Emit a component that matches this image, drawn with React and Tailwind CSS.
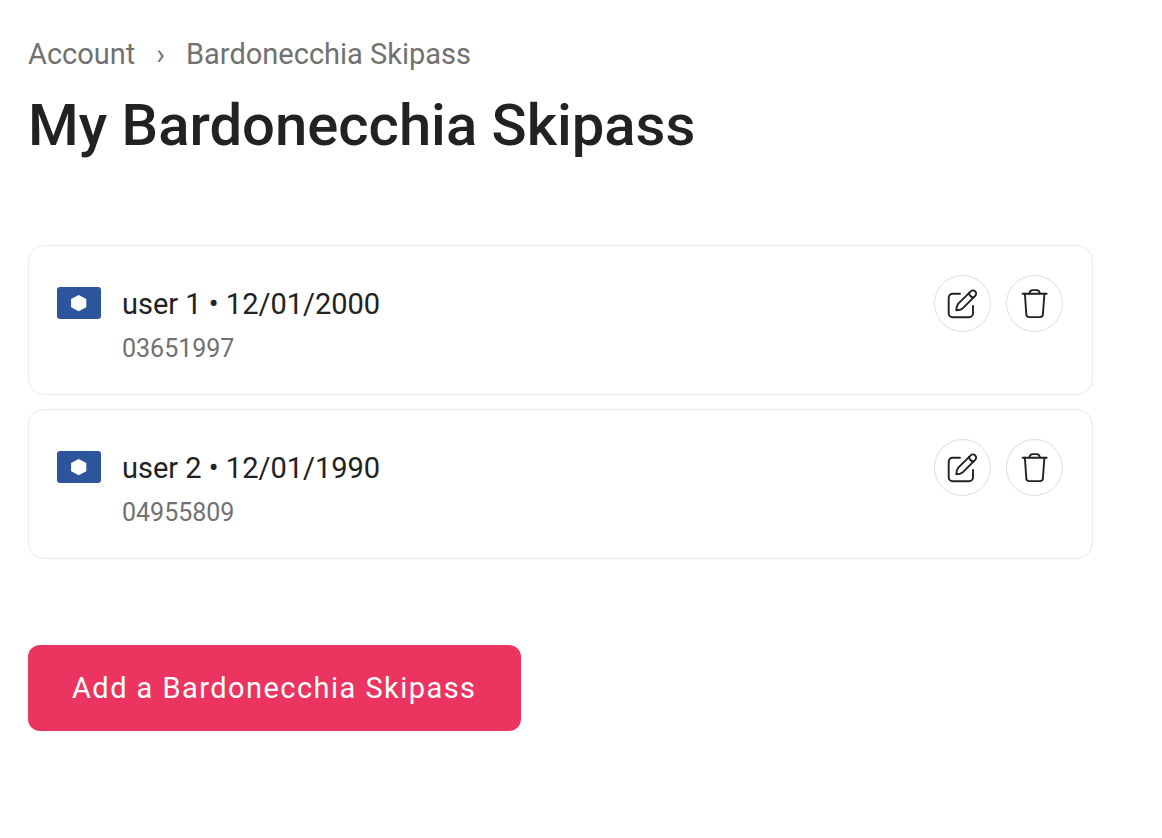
import React from "react";

const PASSES = [
  { id: 1, name: "user 1", birthDate: "12/01/2000", number: "03651997" },
  { id: 2, name: "user 2", birthDate: "12/01/1990", number: "04955809" },
];

function CardIcon() {
  return (
    <svg viewBox="0 0 44 32" className="mt-3 h-8 w-11 shrink-0" aria-hidden="true">
      <rect width="44" height="32" rx="3" fill="#2d559b" />
      <path d="M21.700 8l7.600 4v8.300l-7.600 4-7.600-4V12z" fill="#fff" />
    </svg>
  );
}

function EditIcon() {
  return (
    <svg viewBox="0 0 33 33" className="size-[33px] shrink-0" fill="none" stroke="currentColor" strokeWidth="1.9" strokeLinecap="round" strokeLinejoin="round" aria-hidden="true">
      <path d="M14 6.700H6.700a4 4 0 0 0-4 4v15.600a4 4 0 0 0 4 4H23a4 4 0 0 0 4-4V19" />
      <path d="M10.300 23.300c0-2.600.5-4.700 2-6.600L24.700 4.300a3.150 3.150 0 0 1 4.500 4.500L16.900 21.200c-1.900 1.500-4 2.100-6.600 2.100z" />
      <path d="M23 6c.4 2.500 2 4.100 4.500 4.500" />
    </svg>
  );
}

function TrashIcon() {
  return (
    <svg viewBox="0 0 33 33" className="size-[33px] shrink-0" fill="none" stroke="currentColor" strokeWidth="1.9" strokeLinecap="round" strokeLinejoin="round" aria-hidden="true">
      <path d="M4.600 6.700h24.100" />
      <path d="M6.900 6.700l1.400 20.500a3 3 0 0 0 3 2.900h10.600a3 3 0 0 0 3-2.900l1.500-20.500" />
      <path d="M11.400 6.500c.3-2.200 1.300-3.400 3.200-3.400h4.100c1.900 0 2.900 1.200 3.200 3.400" />
    </svg>
  );
}

function RoundButton({ label, children }) {
  return (
    <button type="button" aria-label={label} className="flex size-[57px] items-center justify-center rounded-full border border-[#dedede] bg-white">
      {children}
    </button>
  );
}

function PassRow({ pass }) {
  return (
    <li className="flex items-start rounded-2xl border border-[#ebebeb] py-[29px] pr-[29px] pl-7">
      <CardIcon />
      <div className="ml-[21px] grow">
        <p className="text-[29px] leading-[58px]">
          {pass.name} • {pass.birthDate}
        </p>
        <p className="text-[25px] leading-8 text-[#717171]">{pass.number}</p>
      </div>
      <div className="flex gap-[15px]">
        <RoundButton label={`Edit ${pass.name}`}>
          <EditIcon />
        </RoundButton>
        <RoundButton label={`Delete ${pass.name}`}>
          <TrashIcon />
        </RoundButton>
      </div>
    </li>
  );
}

export default function App() {
  return (
    <main className="pt-8 pr-[69px] pb-8 pl-7 font-[Roboto,sans-serif] text-[#222]">
      <nav aria-label="Breadcrumb" className="flex gap-[21px] text-[29px] leading-11 text-[#717171]">
        <a href="#account">Account</a>
        <span aria-hidden="true">›</span>
        <a href="#skipass" aria-current="page">Bardonecchia Skipass</a>
      </nav>
      <h1 className="mt-3 text-[58px] leading-[74px] font-medium">My Bardonecchia Skipass</h1>
      <ul className="mt-[83px] flex flex-col gap-3.5">
        {PASSES.map((pass) => (
          <PassRow key={pass.id} pass={pass} />
        ))}
      </ul>
      <button type="button" className="mt-[86px] rounded-xl bg-[#eb345f] px-11 text-[29px] leading-[86px] tracking-wider text-white">
        Add a Bardonecchia Skipass
      </button>
    </main>
  );
}
